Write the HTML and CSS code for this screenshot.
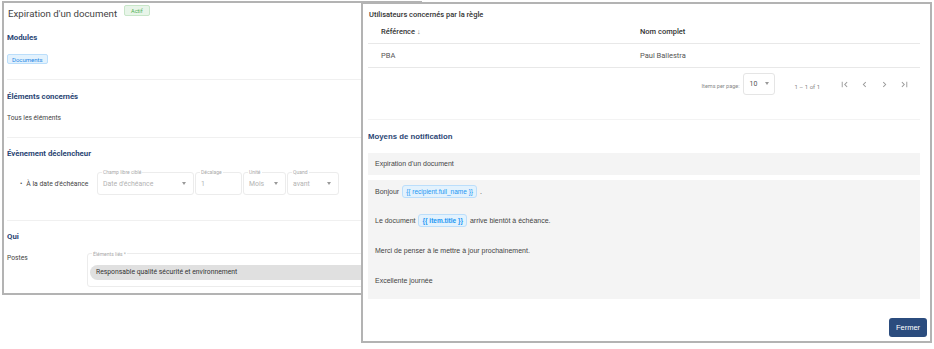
FILE: index.html
```html
<!doctype html>
<html lang="fr">
  <head>
    <meta charset="UTF-8" />
    <title>Expiration d'un document</title>
    <link rel="stylesheet" href="styles.css">
  </head>
  <body>
    <main class="screen">
      <section class="rule-panel">
        <header class="rule-header">
          <h1 class="rule-title">Expiration d'un document</h1>
          <span class="status-badge">Actif</span>
        </header>

        <div class="rule-section">
          <h2 class="section-title">Modules</h2>
          <span class="module-chip">Documents</span>
        </div>

        <div class="rule-section">
          <h2 class="section-title">Éléments concernés</h2>
          <p class="plain-text">Tous les éléments</p>
        </div>

        <div class="rule-section trigger-section">
          <h2 class="section-title">Évènement déclencheur</h2>
          <div class="trigger-row">
            <span class="trigger-label">À la date d'échéance</span>
            <div class="field field-wide">
              <span class="field-label">Champ libre ciblé</span>
              <span class="field-value">Date d'échéance</span>
              <span class="caret"></span>
            </div>
            <div class="field field-offset">
              <span class="field-label">Décalage</span>
              <span class="field-value">1</span>
            </div>
            <div class="field field-unit">
              <span class="field-label">Unité</span>
              <span class="field-value">Mois</span>
              <span class="caret"></span>
            </div>
            <div class="field field-when">
              <span class="field-label">Quand</span>
              <span class="field-value">avant</span>
              <span class="caret"></span>
            </div>
          </div>
        </div>

        <div class="rule-section last-section">
          <h2 class="section-title">Qui</h2>
          <div class="who-row">
            <span class="plain-text">Postes</span>
            <div class="field field-linked">
              <span class="field-label">Éléments liés *</span>
              <span class="linked-chip">Responsable qualité sécurité et environnement</span>
            </div>
          </div>
        </div>
      </section>

      <section class="detail-panel">
        <h2 class="detail-title">Utilisateurs concernés par la règle</h2>
        <table class="users-table">
          <thead>
            <tr>
              <th class="col-ref">Référence <span class="sort-arrow">↓</span></th>
              <th>Nom complet</th>
            </tr>
          </thead>
          <tbody>
            <tr>
              <td class="col-ref">PBA</td>
              <td>Paul Ballestra</td>
            </tr>
          </tbody>
        </table>

        <div class="paginator">
          <span class="page-size-label">Items per page:</span>
          <div class="page-size">
            <span>10</span>
            <span class="caret"></span>
          </div>
          <span class="page-range">1 – 1 of 1</span>
          <div class="page-nav">
            <svg viewBox="0 0 24 24"><path d="M18.41 16.59L13.82 12l4.59-4.59L17 6l-6 6 6 6zM6 6h2v12H6z"/></svg>
            <svg viewBox="0 0 24 24"><path d="M15.41 7.41L14 6l-6 6 6 6 1.41-1.41L10.83 12z"/></svg>
            <svg viewBox="0 0 24 24"><path d="M10 6L8.59 7.41 13.17 12l-4.58 4.59L10 18l6-6z"/></svg>
            <svg viewBox="0 0 24 24"><path d="M5.59 7.41L10.18 12l-4.59 4.59L7 18l6-6-6-6zM16 6h2v12h-2z"/></svg>
          </div>
        </div>

        <h2 class="section-title notif-title">Moyens de notification</h2>
        <div class="mail-subject">Expiration d'un document</div>
        <div class="mail-body">
          <p>Bonjour <span class="token">{{ recipient.full_name }}</span> .</p>
          <p>Le document <span class="token token-bold">{{ item.title }}</span> arrive bientôt à échéance.</p>
          <p>Merci de penser à le mettre à jour prochainement.</p>
          <p>Excellente journée</p>
        </div>

        <div class="detail-actions">
          <button class="close-button">Fermer</button>
        </div>
      </section>
    </main>
  </body>
</html>
```

FILE: styles.css
```css
* {
  margin: 0;
  padding: 0;
  box-sizing: border-box;
}

html,
body {
  height: 100%;
  overflow: hidden;
  background: #fff;
}

.screen {
  position: relative;
  width: 934px;
  height: 349px;
  font-family: Roboto, "Liberation Sans", sans-serif;
  color: #333;
}

/* left panel: rule summary */

.rule-panel {
  margin: 1px 0 0 2px;
  width: 420px;
  height: 294px;
  border: 2px solid #b3b3b3;
  padding: 0 3px;
  overflow: hidden;
}

.rule-header {
  display: flex;
  align-items: flex-start;
  height: 21px;
}

.rule-title {
  font-size: 9.7px;
  font-weight: 400;
  color: #444;
  line-height: 21px;
  margin-left: 1px;
}

.status-badge {
  margin: 2px 0 0 7px;
  padding: 0 6px;
  height: 11px;
  line-height: 10px;
  font-size: 5.5px;
  color: #4caf50;
  background: #e8f5e9;
  border: 1px solid #c8e6c9;
  border-radius: 2px;
}

.rule-section {
  border-bottom: 1px solid #f0f0f0;
}

.section-title {
  font-size: 7.8px;
  font-weight: 700;
  color: #2c4775;
  line-height: 12px;
}

.rule-section:nth-of-type(1) {
  padding: 8px 0 13px;
}

.rule-section:nth-of-type(2) {
  padding: 11px 0 14px;
}

.rule-section:nth-of-type(3) {
  padding: 10px 0 25px;
}

.last-section {
  border-bottom: none;
  padding-top: 10px;
}

.module-chip {
  display: inline-block;
  margin-top: 10px;
  padding: 0 4px;
  height: 10px;
  line-height: 9px;
  font-size: 6px;
  color: #1e88e5;
  background: #e3f2fd;
  border: 1px solid #bbdefb;
  border-radius: 2px;
}

.plain-text {
  font-size: 6.7px;
  color: #444;
  line-height: 10px;
}

.rule-section:nth-of-type(2) .plain-text {
  margin-top: 10px;
}

.trigger-row {
  display: flex;
  align-items: center;
  margin-top: 12px;
  gap: 1px;
}

.trigger-label {
  font-size: 6.8px;
  color: #444;
  width: 89px;
  padding-left: 13px;
}

.trigger-label::before {
  content: "•";
  margin-right: 4px;
}

.field {
  position: relative;
  display: flex;
  align-items: center;
  height: 23px;
  border: 1px solid #ececec;
  border-radius: 3px;
  padding: 0 5px;
}

.field-label {
  position: absolute;
  top: -4px;
  left: 4px;
  padding: 0 1px;
  background: #fff;
  font-size: 5px;
  line-height: 6px;
  color: #aaa;
}

.field-value {
  font-size: 6.9px;
  color: #b3b3b3;
  flex: 1;
}

.caret {
  width: 0;
  height: 0;
  border-left: 2.5px solid transparent;
  border-right: 2.5px solid transparent;
  border-top: 3px solid #999;
}

.field-wide {
  width: 97px;
  padding-right: 7px;
}

.field-offset {
  width: 47px;
}

.field-unit {
  width: 43px;
  padding-right: 7px;
}

.field-when {
  width: 52px;
  padding-right: 7px;
}

.who-row {
  display: flex;
  align-items: flex-start;
  margin-top: 10px;
}

.who-row .plain-text {
  width: 80px;
  margin-top: 0;
}

.field-linked {
  width: 320px;
  height: 34px;
  margin-top: 0;
  padding: 0 2px 6px;
  align-items: flex-end;
}

.field-linked .field-label {
  top: -3px;
}

.linked-chip {
  flex: 1;
  height: 15px;
  line-height: 15px;
  padding: 0 6px;
  font-size: 6.8px;
  color: #333;
  background: #e0e0e0;
  border-radius: 8px;
  white-space: nowrap;
}

/* right panel: users and notification */

.detail-panel {
  position: absolute;
  left: 361px;
  top: 1px;
  width: 571px;
  height: 341px;
  border: 2px solid #b3b3b3;
  background: #fff;
  padding: 6px 10px 0 5px;
  display: flex;
  flex-direction: column;
}

.detail-panel > * {
  flex-shrink: 0;
}

.detail-title {
  font-size: 7.5px;
  font-weight: 500;
  color: #333;
  line-height: 10px;
  padding-left: 1px;
}

.users-table {
  margin-top: 1px;
  width: 552px;
  border-collapse: collapse;
  font-size: 7.5px;
}

.users-table th,
.users-table td {
  text-align: left;
  padding-left: 13px;
  border-bottom: 1px solid #e8e8e8;
}

.users-table th {
  height: 22px;
  font-weight: 500;
  color: #333;
}

.users-table td {
  height: 24px;
  color: #555;
}

.users-table .col-ref {
  width: 259px;
}

.sort-arrow {
  color: #777;
  font-size: 7px;
}

.paginator {
  display: flex;
  align-items: flex-start;
  justify-content: flex-end;
  width: 552px;
  height: 52px;
  padding-right: 10px;
  border-bottom: 1px solid #f3f3f3;
  margin-bottom: 11px;
}

.page-size-label {
  font-size: 5.5px;
  color: #888;
  margin-top: 15px;
}

.page-size {
  display: flex;
  align-items: center;
  justify-content: space-between;
  width: 32px;
  height: 22px;
  margin: 5px 0 0 4px;
  padding: 0 5px;
  border: 1px solid #e5e5e5;
  border-radius: 3px;
  font-size: 7px;
  color: #555;
}

.page-range {
  margin: 15px 0 0 19px;
  font-size: 6px;
  color: #888;
}

.page-nav {
  display: flex;
  gap: 9px;
  margin: 11px 0 0 19px;
}

.page-nav svg {
  width: 11px;
  height: 11px;
  fill: #999;
}

.notif-title {
  font-family: "Liberation Sans", Arial, sans-serif;
  line-height: 12px;
}

.mail-subject,
.mail-body {
  width: 552px;
  background: #f4f4f4;
  font-family: "Liberation Sans", Arial, sans-serif;
  font-size: 7px;
  color: #444;
}

.mail-subject {
  margin-top: 10px;
  height: 22px;
  line-height: 22px;
  padding-left: 7px;
}

.mail-body {
  margin-top: 5px;
  height: 119px;
  padding: 5px 7px 0;
  display: flex;
  flex-direction: column;
  gap: 16px;
}

.mail-body p {
  height: 13px;
  line-height: 13px;
  display: flex;
  align-items: center;
  gap: 3px;
}

.mail-body p + p {
  height: 14px;
}

.token {
  display: inline-block;
  padding: 0 3px;
  height: 13px;
  line-height: 11px;
  font-size: 6.5px;
  color: #2196f3;
  background: #e3f2fd;
  border: 1px solid #bbdefb;
  border-radius: 3px;
}

.token-bold {
  font-weight: 700;
}

.detail-actions {
  display: flex;
  justify-content: flex-end;
  margin-top: 19px;
  margin-right: -7px;
}

.close-button {
  width: 38px;
  height: 19px;
  border: none;
  border-radius: 3px;
  background: #2b4c7e;
  color: #fff;
  font-family: "Liberation Sans", Arial, sans-serif;
  font-size: 7.5px;
  cursor: pointer;
}
```
